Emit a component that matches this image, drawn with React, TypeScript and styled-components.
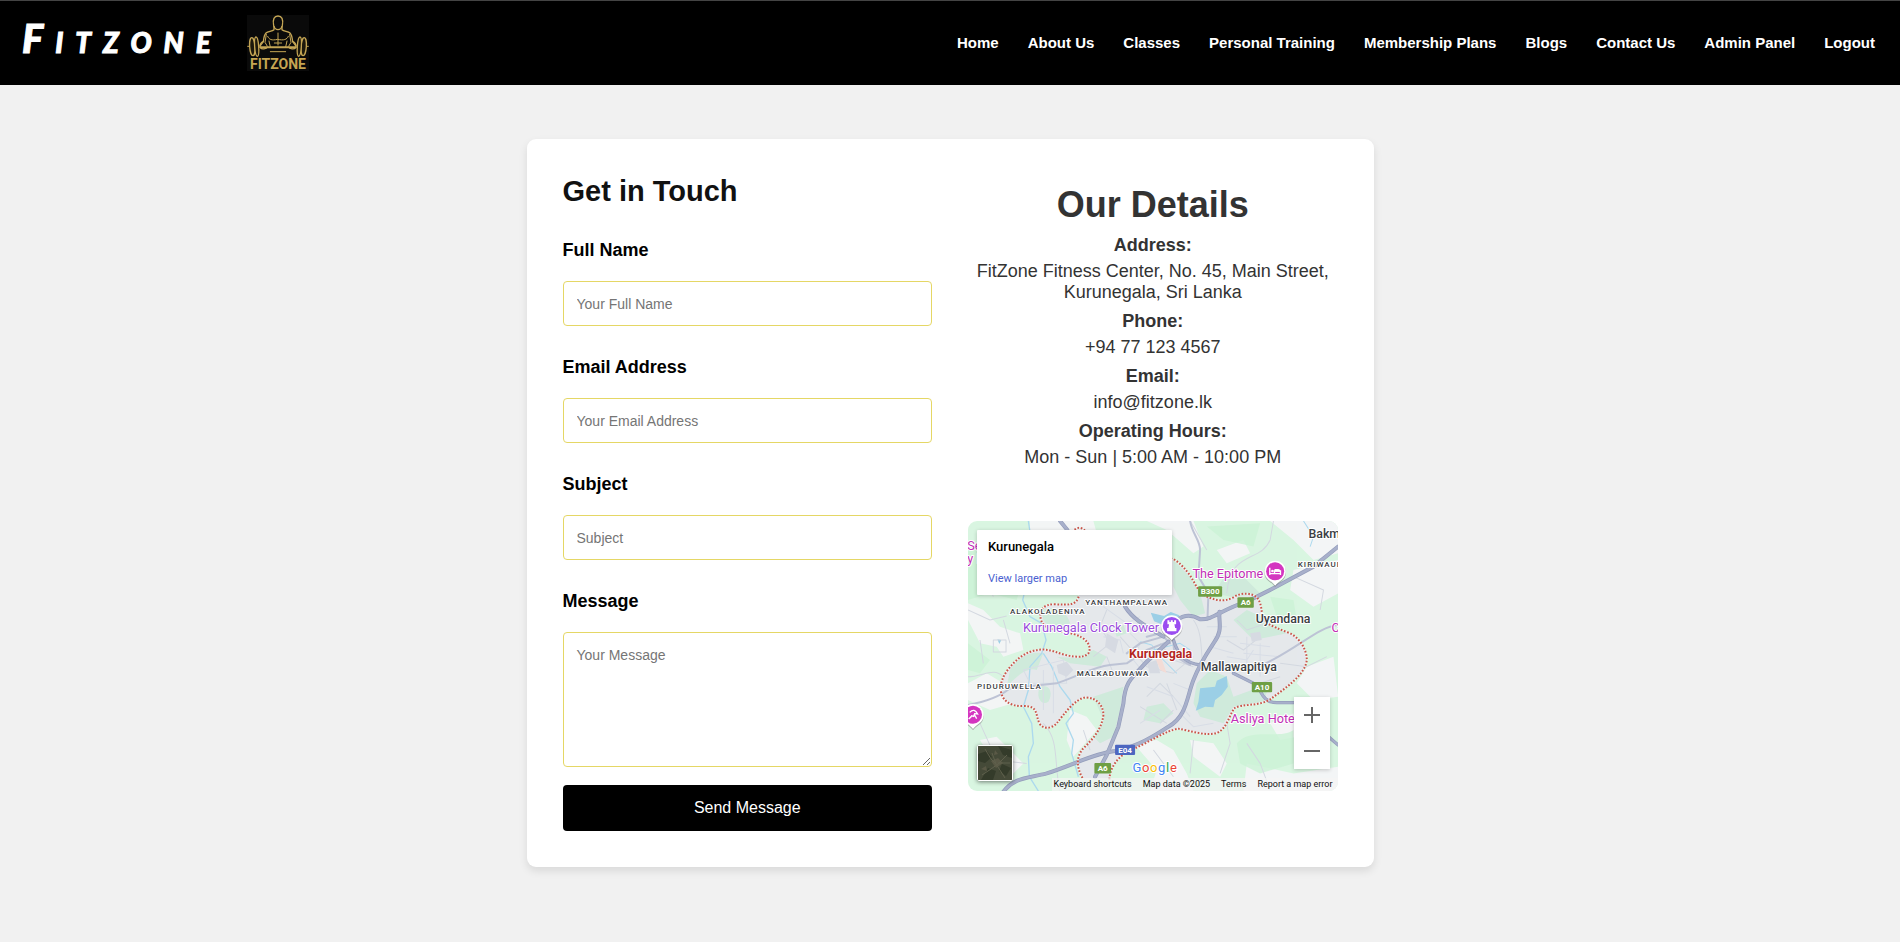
import React from "react";
import styled, { createGlobalStyle } from "styled-components";

const GlobalStyle = createGlobalStyle`
  *, *::before, *::after { box-sizing: border-box; }
  body {
    margin: 0;
    background: #f1f1f1;
    font-family: Arial, "Liberation Sans", sans-serif;
    color: #000;
  }
`;

const Header = styled.header`
  display: flex;
  align-items: center;
  justify-content: space-between;
  min-height: 85px;
  padding: 0 25px 0 22px;
  background: #000;
  border-top: 1px solid #444;
`;

const Brand = styled.a`
  display: flex;
  align-items: center;
  gap: 24px;
  color: #fff;
  text-decoration: none;
`;

const BrandName = styled.span`
  display: block;
  padding-bottom: 6px;
  font-family: Lato, "Liberation Sans", sans-serif;
  font-size: 28px;
  line-height: 48px;
  font-weight: 900;
  font-style: italic;
  text-transform: uppercase;
  letter-spacing: 12px;
  -webkit-text-stroke: 1px #fff;

  &::first-letter {
    font-size: 40px;
  }
`;

const Emblem = styled.svg`
  display: block;
  width: 62px;
  height: 56px;
`;

const Nav = styled.nav`
  display: flex;
  flex-wrap: wrap;
  gap: 29px;
`;

const NavLink = styled.a`
  color: #fff;
  font-size: 15px;
  line-height: 18px;
  font-weight: bold;
  text-decoration: none;
`;

const Main = styled.main`
  padding: 54px 24px;
`;

const Card = styled.section`
  display: grid;
  grid-template-columns: 1fr 1fr;
  gap: 36px;
  max-width: 847px;
  margin: 0 auto;
  padding: 36px;
  background: #fff;
  border-radius: 9px;
  box-shadow: 0 4px 8px rgba(0, 0, 0, 0.1);
`;

const Form = styled.form`
  display: flex;
  flex-direction: column;
`;

const FormTitle = styled.h2`
  margin: 0 0 32px;
  font-size: 29px;
  line-height: 33px;
  color: #111;
`;

const Fields = styled.div`
  display: flex;
  flex-direction: column;
  gap: 31px;
`;

const Field = styled.div`
  display: flex;
  flex-direction: column;
  gap: 20px;
`;

const Label = styled.label`
  font-size: 18px;
  line-height: 21px;
  font-weight: bold;
`;

const Input = styled.input`
  width: 100%;
  height: 45px;
  padding: 13px;
  border: 1px solid #e5d765;
  border-radius: 4px;
  background: #fff;
  font-family: inherit;
  font-size: 14px;
  &::placeholder { color: #757575; }
`;

const TextArea = styled.textarea`
  display: block;
  width: 100%;
  height: 135px;
  padding: 14px 13px;
  border: 1px solid #e5d765;
  border-radius: 4px;
  background: #fff;
  font-family: inherit;
  font-size: 14px;
  resize: vertical;
  &::placeholder { color: #757575; }
`;

const SubmitButton = styled.button`
  height: 46px;
  margin-top: 18px;
  border: 0;
  border-radius: 4px;
  background: #000;
  color: #fff;
  font-family: inherit;
  font-size: 16px;
  cursor: pointer;
`;

const Details = styled.div`
  padding-top: 9px;
  color: #333;
  text-align: center;
`;

const DetailsTitle = styled.h1`
  margin: 0 0 10px;
  font-size: 36px;
  line-height: 41px;
`;

const DetailList = styled.dl`
  display: flex;
  flex-direction: column;
  gap: 8px;
  margin: 0 0 53px;
  font-size: 18px;
  line-height: 21px;
`;

const DetailTerm = styled.dt`
  margin-bottom: 5px;
  font-weight: bold;
`;

const DetailValue = styled.dd`
  margin: 0;
`;

const MapFrame = styled.div`
  position: relative;
  height: 270px;
  border-radius: 9px;
  overflow: hidden;
  font-family: Roboto, "Liberation Sans", sans-serif;
  text-align: left;
`;

const MapDrawing = styled.svg`
  display: block;
  width: 100%;
  height: 100%;
`;

const PlaceCard = styled.div`
  position: absolute;
  top: 9px;
  left: 9px;
  width: 195px;
  height: 65px;
  padding: 9px 11px;
  display: flex;
  flex-direction: column;
  gap: 17px;
  background: #fff;
  border-radius: 1px;
  box-shadow: 0 1px 4px rgba(0, 0, 0, 0.2);
`;

const PlaceName = styled.strong`
  font-size: 13px;
  line-height: 16px;
  font-weight: 500;
  color: #000;
`;

const PlaceLink = styled.a`
  font-size: 11px;
  line-height: 14px;
  color: #4a5fd0;
  text-decoration: none;
`;

const ZoomControls = styled.div`
  position: absolute;
  right: 8px;
  bottom: 22px;
  display: flex;
  flex-direction: column;
  background: #fff;
  box-shadow: 0 1px 4px rgba(0, 0, 0, 0.2);
`;

const ZoomButton = styled.button`
  display: grid;
  place-items: center;
  width: 36px;
  height: 36px;
  padding: 0;
  border: 0;
  background: none;
  cursor: pointer;
`;

const LayerButton = styled.button`
  position: absolute;
  left: 9px;
  bottom: 10px;
  width: 36px;
  height: 36px;
  padding: 0;
  border: 1px solid #fff;
  border-radius: 2px;
  overflow: hidden;
  background: #434836;
  box-shadow: 0 1px 4px rgba(0, 0, 0, 0.5);
  cursor: pointer;

  svg { display: block; }
`;

const Attribution = styled.div`
  position: absolute;
  right: 0;
  bottom: 0;
  display: flex;
  gap: 11px;
  padding: 0 5px 0 2px;
  background: rgba(245, 245, 245, 0.7);
  color: #111;
  font-size: 9px;
  line-height: 13px;
  white-space: nowrap;

  a {
    color: inherit;
    text-decoration: none;
  }
`;

const navItems = [
  "Home",
  "About Us",
  "Classes",
  "Personal Training",
  "Membership Plans",
  "Blogs",
  "Contact Us",
  "Admin Panel",
  "Logout",
];

const details = [
  ["Address:", "FitZone Fitness Center, No. 45, Main Street, Kurunegala, Sri Lanka"],
  ["Phone:", "+94 77 123 4567"],
  ["Email:", "info@fitzone.lk"],
  ["Operating Hours:", "Mon - Sun | 5:00 AM - 10:00 PM"],
];

function FitzoneEmblem() {
  return (
    <Emblem viewBox="0 0 186 168" aria-hidden="true">
      <rect width="186" height="168" fill="#0a0a0a" />
      <g fill="none" stroke="#c5a655" strokeWidth="4" strokeLinecap="round" strokeLinejoin="round">
        <path d="M80 32C76 12 82 3 93 3s17 9 13 29c-2 7-7 12-13 12s-11-5-13-12Z" />
        <path d="M81 34v10c-6 6-18 4-24 10-6 6-7 16-8 26l-9 12" />
        <path d="M105 34v10c6 6 18 4 24 10 6 6 7 16 8 26l9 12" />
        <path d="M62 64c4 10 12 13 30 9 18 4 28 1 32-9M66 78l4 18M120 78l-4 18" strokeWidth="3" />
        <path d="M93 54v36M82 84h22M58 58l-4 24 6 10M128 58l4 24-6 10" strokeWidth="3" />
        <path d="M48 80c-6 2-12 12-8 18s18 4 22-2M138 80c6 2 12 12 8 18s-18 4-22-2" />
        <path d="M40 97h106" strokeWidth="6" />
        <path d="M2 94h10M174 94h10M70 110h46" strokeWidth="3" />
      </g>
      <g fill="#1c180c" stroke="#c5a655" strokeWidth="4">
        <ellipse cx="16" cy="95" rx="8" ry="27" transform="rotate(-4 16 95)" />
        <ellipse cx="29" cy="95" rx="6" ry="29" transform="rotate(-4 29 95)" />
        <ellipse cx="170" cy="95" rx="8" ry="27" transform="rotate(4 170 95)" />
        <ellipse cx="157" cy="95" rx="6" ry="29" transform="rotate(4 157 95)" />
      </g>
      <text
        x="93"
        y="163"
        textAnchor="middle"
        fontFamily="Roboto, 'Liberation Sans', sans-serif"
        fontWeight="700"
        fontSize="42"
        fill="#c5a552"
      >
        FITZONE
      </text>
    </Emblem>
  );
}

const boundary =
  "M338 68C345 50 368 48 378 68M358 250C352 290 325 284 285 283C250 282 235 300 243 330C252 362 300 362 340 372C378 382 396 408 386 428C372 450 320 438 285 425C245 412 210 420 180 442C150 466 122 500 122 535C122 570 150 590 190 588C235 588 225 610 238 640C250 660 275 655 290 640C310 615 345 565 378 562C415 565 430 590 430 615C425 660 395 690 368 717C345 745 352 780 370 808M448 808C450 770 475 735 520 717C560 700 620 660 655 656C690 662 740 680 772 668C800 655 806 620 822 595C845 580 895 590 930 568C975 535 1035 495 1040 450C1040 420 1020 385 990 370C960 358 935 350 915 335C900 320 910 285 890 262C875 250 845 245 820 262C790 278 765 270 740 260C710 245 705 215 685 190C665 165 650 150 634 146";

const minorRoads =
  "M24 300L90 330L140 318M60 390L70 460M100 390h38v36h-38ZM24 500C70 500 100 470 130 500M690 33L700 50L740 120M560 560L600 520L640 560M800 640L810 700L780 790M860 700L900 760L930 840M700 690L690 790M1030 690L1080 740M250 640C300 690 280 760 300 843M370 660L390 720M580 720L640 800M940 33L930 90C900 160 810 120 800 250M1000 200L1090 240L1080 300M440 300L420 350L450 400L400 440M480 380L560 470L640 490L700 440M800 390L850 420L900 380M830 330L860 360L920 340M640 600L600 640M620 520L650 600M540 590L620 640M60 640L110 750L200 760M210 120L250 250M130 330L150 400M700 330C730 370 720 430 730 470M440 440L460 490M600 400L640 450L700 470M960 460L1040 470L1100 440M70 190L100 260M900 520L960 500";

function PlaceLabel({
  x,
  y,
  size,
  fill = "#3a3d42",
  weight = 500,
  spacing = 0,
  children,
}: {
  x: number;
  y: number;
  size: number;
  fill?: string;
  weight?: number;
  spacing?: number;
  children: React.ReactNode;
}) {
  return (
    <text
      x={x}
      y={y}
      fontSize={size}
      fill={fill}
      fontWeight={weight}
      letterSpacing={spacing}
      stroke="#fff"
      strokeWidth="6"
      strokeLinejoin="round"
      paintOrder="stroke"
    >
      {children}
    </text>
  );
}

function Shield({ x, y, width, fill = "#6f9f45", name }: { x: number; y: number; width: number; fill?: string; name: string }) {
  return (
    <g>
      <rect x={x} y={y} width={width} height="31" rx="3" fill={fill} />
      <text x={x + width / 2} y={y + 24} textAnchor="middle" fontSize="24" fontWeight="700" fill="#fff">
        {name}
      </text>
    </g>
  );
}

function Pin({ x, y, fill, children }: { x: number; y: number; fill: string; children: React.ReactNode }) {
  return (
    <g transform={`translate(${x} ${y})`}>
      <path d="M0 43C-6 35-12 31-20 25A32 32 0 1 1 20 25C12 31 6 35 0 43Z" fill="#555" opacity=".4" transform="translate(0 4)" />
      <path d="M0 43C-6 35-12 31-20 25A32 32 0 1 1 20 25C12 31 6 35 0 43Z" fill="#fff" />
      <circle r="27" fill={fill} />
      {children}
    </g>
  );
}

function KurunegalaMap() {
  return (
    <MapDrawing viewBox="24 33 1108 810" preserveAspectRatio="xMinYMid slice" role="img" aria-label="Map of Kurunegala">
      <rect x="0" y="0" width="1160" height="870" fill="#d9f6e1" />
      <g fill="#f3f5f6">
        <path d="M210 33H400L410 70H210Z M560 33H700L730 110L700 130L620 60Z" />
        <path d="M24 280L70 300L120 350L180 370L190 420L130 440L110 410L60 400L24 330Z" />
        <path d="M24 520L80 490L130 520L160 580L90 600L24 570Z" />
        <path d="M770 120L850 90L870 130L800 160ZM1000 180L1134 150V250L1060 290L990 240Z" />
        <path d="M520 700L590 690L640 720L680 790L700 843H570L590 780Z" />
        <path d="M690 690L760 700L800 760L780 800L700 740ZM1040 470L1120 440L1134 560L1060 570L1010 520Z" />
        <path d="M930 640L1000 610L1010 680L960 690ZM60 690L110 680L190 760L160 790L90 740ZM930 33H1134V130L1060 150L1000 90Z" />
        <path d="M330 600L380 620L410 660L340 740L320 690ZM860 760L1000 790L1134 770V843H850Z" />
      </g>
      <path
        d="M358 250C352 290 325 284 285 283C250 282 235 300 243 330C252 362 300 362 340 372C378 382 396 408 386 428C372 450 320 438 285 425C245 412 210 420 180 442C150 466 122 500 122 535C122 570 150 590 190 588C235 588 225 610 238 640C250 660 275 655 290 640C310 615 345 565 378 562C415 565 430 590 430 615C425 660 395 690 368 717C345 745 352 780 370 808H448C450 770 475 735 520 717C560 700 620 660 655 656C690 662 740 680 772 668C800 655 806 620 822 595C845 580 895 590 930 568C975 535 1035 495 1040 450C1040 420 1020 385 990 370C960 358 935 350 915 335C900 320 910 285 890 262C875 250 845 245 820 262C790 278 765 270 740 260C710 245 705 215 685 190L634 146V250Z"
        fill="#e5e8ec"
      />
      <g fill="#cfeadb">
        <path d="M245 300C280 285 320 300 330 340C300 365 260 350 250 330Z" />
        <path d="M150 480C180 430 225 425 250 430L230 480C200 470 170 500 140 530Z" />
        <path d="M290 440L350 445L400 420L440 440L420 470L330 460ZM240 530C270 520 280 550 265 575C245 590 225 560 240 530Z" />
        <path d="M640 150L690 200L720 250L735 310L700 320L660 270L640 230Z" />
        <path d="M760 250L800 190L850 200L900 250L820 262ZM820 330L860 300L905 320L980 370L930 380L880 390Z" />
        <path d="M400 560L490 530L480 600L460 680L420 700L400 680L430 630Z" />
        <path d="M710 520L750 480L800 500L820 560L930 520L910 575L820 590L790 640L720 620L700 580Z" />
        <path d="M560 590L610 580L640 610L600 640L550 630ZM460 350L490 345L500 370L470 380Z" />
      </g>
      <g fill="#cbf3d6" opacity=".8">
        <path d="M24 120C100 100 150 140 190 200L170 270L90 250L24 270ZM830 700C870 650 960 690 1000 660V760L900 790L840 760Z" />
        <path d="M24 400L90 450L60 490L24 480ZM740 50L900 40L880 110L790 90ZM930 260L1000 270L1010 330L950 320Z" />
      </g>
      <g fill="#9bcfe6">
        <path d="M720 535L765 530L770 512L800 498L803 530L785 555L765 570L760 592L735 590L707 602L715 575Z" />
        <path d="M572 308L612 318L632 306L658 316L655 334L630 330L608 344L582 334ZM112 388l12 2-6 12Z" />
      </g>
      <g fill="none" stroke="#acd9ee" strokeWidth="4" strokeLinejoin="round">
        <path d="M205 33L215 100L190 160L200 220L188 270L210 320L245 340L258 390L245 430L210 470L205 540L190 590L215 640L220 700L205 740L208 800L235 843" />
        <path d="M250 430L275 470L300 530L330 570L340 610L318 640L340 690L335 730L355 800" />
        <path d="M540 395L575 405L610 450L650 490M520 440L580 420L660 400L690 420M1030 33L1060 80L1050 110" strokeWidth="3" />
      </g>
      <path d={minorRoads} fill="none" stroke="#d3d8e0" strokeWidth="3" strokeLinejoin="round" />
      <g fill="none" stroke="#d8dde6" strokeWidth="3">
        <path d="M430 290L500 340L540 320M500 360L540 400L520 450L560 500M740 350H800M760 380H830M750 410L820 430M800 440L860 450L880 420M640 520L690 540M560 530L640 560L690 620M540 640L600 600M430 380L480 390L490 430M660 610L700 650L760 640M860 380V470M900 400V500M840 400L930 410M850 430L960 440M190 480L310 450L320 520L210 520ZM250 480V600M280 470V610" />
      </g>
      <g fill="#d6dae2">
        <path d="M290 465L320 455L340 480L320 500L295 490ZM560 460L590 450L600 490L570 490ZM870 370L900 365L905 390L875 395ZM440 370L475 390L465 430L435 410Z" />
        <path d="M580 430L600 435L620 490L600 480Z" fill="#f3dcd6" />
      </g>
      <g fill="none" stroke="#bdc3d5" strokeWidth="6" strokeLinecap="round" strokeLinejoin="round">
        <path d="M24 585C80 575 120 560 150 535L290 520C350 500 400 470 450 465L500 460L560 420L625 395" />
        <path d="M690 33C695 70 720 90 720 120L715 200L745 250L742 330M1134 345C1080 350 1030 400 940 448L880 480M610 380L540 400L500 430M640 390C640 430 640 440 690 465M630 400L600 370L560 380" />
      </g>
      <g fill="none" strokeLinecap="round" strokeLinejoin="round">
        <g stroke="#949dbb" strokeWidth="12">
          <path d="M130 845C165 800 205 805 260 790C340 765 400 730 465 723C530 710 580 680 625 650C680 620 680 560 700 510C715 470 740 430 760 400C790 360 775 340 778 305" />
          <path d="M645 340C660 315 690 310 720 328C760 330 780 300 860 275L945 232L1060 170L1134 110" />
          <path d="M405 800L440 735L475 650L490 580C495 510 520 500 560 455L625 395" />
          <path d="M300 33L322 60M495 290C520 330 560 350 610 380" />
          <path d="M640 390C655 440 680 460 720 465M820 490L880 520C905 530 900 578 950 578H1000M1105 680L1134 705" strokeWidth="10" />
        </g>
        <g stroke="#a8b0cb" strokeWidth="8">
          <path d="M130 845C165 800 205 805 260 790C340 765 400 730 465 723C530 710 580 680 625 650C680 620 680 560 700 510C715 470 740 430 760 400C790 360 775 340 778 305" />
          <path d="M645 340C660 315 690 310 720 328C760 330 780 300 860 275L945 232L1060 170L1134 110" />
          <path d="M405 800L440 735L475 650L490 580C495 510 520 500 560 455L625 395" />
          <path d="M300 33L322 60M495 290C520 330 560 350 610 380" />
          <path d="M640 390C655 440 680 460 720 465M820 490L880 520C905 530 900 578 950 578H1000M1105 680L1134 705" strokeWidth="6" />
        </g>
      </g>
      <path d={boundary} fill="none" stroke="#fff" strokeWidth="6" opacity=".5" />
      <path d={boundary} fill="none" stroke="#c9564b" strokeWidth="6" strokeDasharray="5 5" />

      <Shield x={714} y={229} width={72} name="B300" />
      <Shield x={832} y={262} width={49} name="A6" />
      <Shield x={875} y={516} width={61} name="A10" />
      <Shield x={403} y={759} width={50} name="A6" />
      <Shield x={465} y={704} width={60} fill="#4d66c0" name="E04" />

      <PlaceLabel x={376} y={284} size={24} spacing={3}>YANTHAMPALAWA</PlaceLabel>
      <PlaceLabel x={150} y={311} size={24} spacing={3}>ALAKOLADENIYA</PlaceLabel>
      <PlaceLabel x={350} y={497} size={24} spacing={3}>MALKADUWAWA</PlaceLabel>
      <PlaceLabel x={51} y={537} size={24} spacing={3}>PIDURUWELLA</PlaceLabel>
      <PlaceLabel x={1013} y={171} size={24} spacing={3}>KIRIWAUL</PlaceLabel>
      <PlaceLabel x={1045} y={84} size={37}>Bakm</PlaceLabel>
      <PlaceLabel x={887} y={338} size={37}>Uyandana</PlaceLabel>
      <PlaceLabel x={722} y={483} size={37}>Mallawapitiya</PlaceLabel>
      <PlaceLabel x={507} y={443} size={37} fill="#b3261e" weight={700}>Kurunegala</PlaceLabel>
      <PlaceLabel x={189} y={367} size={38} fill="#9a4bdb" weight={400}>Kurunegala Clock Tower</PlaceLabel>
      <PlaceLabel x={697} y={203} size={38} fill="#c12fb5" weight={400}>The Epitome</PlaceLabel>
      <PlaceLabel x={812} y={640} size={38} fill="#c12fb5" weight={400}>Asliya Hote</PlaceLabel>
      <PlaceLabel x={22} y={121} size={38} fill="#c12fb5" weight={400}>Se</PlaceLabel>
      <PlaceLabel x={22} y={158} size={38} fill="#c12fb5" weight={400}>y I</PlaceLabel>
      <PlaceLabel x={1114} y={367} size={38} fill="#c12fb5" weight={400}>C</PlaceLabel>

      <Pin x={945} y={184} fill="#d436c0">
        <path d="M-16-11v22M-16 7h32v4M16 7V-1H-2v7" fill="none" stroke="#fff" strokeWidth="4" />
        <path d="M-2-7h12q6 0 6 8H-2Z" fill="#fff" />
        <circle cx="-8" cy="-1" r="4" fill="#fff" />
      </Pin>
      <Pin x={635} y={348} fill="#9a4df0">
        <path d="M-13-17h6v5h4v-5h6v5h4v-5h6v12h-5l2 11h4v10h-28V6h4l2-11h-5Z" fill="#fff" />
      </Pin>
      <Pin x={39} y={614} fill="#d436c0">
        <path d="M-10-7q14-14 24 5l-9-1-3 8-6-2-4 7M-4 4l-9 9M3-2l8 14" fill="none" stroke="#fff" strokeWidth="4" />
      </Pin>

      <text x="517" y="787" fontSize="39" fontWeight="400" stroke="#fff" strokeWidth="6" paintOrder="stroke" letterSpacing="2">
        <tspan fill="#4285f4">G</tspan>
        <tspan fill="#ea4335">o</tspan>
        <tspan fill="#fbbc05">o</tspan>
        <tspan fill="#4285f4">g</tspan>
        <tspan fill="#34a853">l</tspan>
        <tspan fill="#ea4335">e</tspan>
      </text>
    </MapDrawing>
  );
}

function SatelliteThumb() {
  return (
    <svg width="34" height="34" viewBox="0 0 34 34" aria-hidden="true">
      <rect width="34" height="34" fill="#454a38" />
      <path d="M0 8L9 5L14 11L7 17L0 15ZM20 0L34 4V12L25 9ZM10 22L18 25L15 34H3ZM24 18L33 22L28 30L21 25Z" fill="#343b2a" />
      <path d="M13 15L20 12L25 17L18 22ZM3 23L8 20L9 25ZM17 4L20 8L16 9Z" fill="#5a5946" />
      <path d="M7 3L13 13L18 18L27 32M29 9L20 18L13 23L4 29M18 18L14 7M20 17L32 17" fill="none" stroke="#5f604c" strokeWidth="1" />
    </svg>
  );
}

export default function App() {
  return (
    <>
      <GlobalStyle />
      <Header>
        <Brand href="#home">
          <BrandName>Fitzone</BrandName>
          <FitzoneEmblem />
        </Brand>
        <Nav aria-label="Main">
          {navItems.map((item) => (
            <NavLink key={item} href="#">
              {item}
            </NavLink>
          ))}
        </Nav>
      </Header>

      <Main>
        <Card>
          <Form onSubmit={(event) => event.preventDefault()}>
            <FormTitle>Get in Touch</FormTitle>
            <Fields>
              <Field>
                <Label htmlFor="name">Full Name</Label>
                <Input id="name" type="text" placeholder="Your Full Name" />
              </Field>
              <Field>
                <Label htmlFor="email">Email Address</Label>
                <Input id="email" type="email" placeholder="Your Email Address" />
              </Field>
              <Field>
                <Label htmlFor="subject">Subject</Label>
                <Input id="subject" type="text" placeholder="Subject" />
              </Field>
              <Field>
                <Label htmlFor="message">Message</Label>
                <TextArea id="message" placeholder="Your Message" />
              </Field>
            </Fields>
            <SubmitButton type="submit">Send Message</SubmitButton>
          </Form>

          <Details>
            <DetailsTitle>Our Details</DetailsTitle>
            <DetailList>
              {details.map(([term, value]) => (
                <div key={term}>
                  <DetailTerm>{term}</DetailTerm>
                  <DetailValue>{value}</DetailValue>
                </div>
              ))}
            </DetailList>
            <MapFrame>
              <KurunegalaMap />
              <PlaceCard>
                <PlaceName>Kurunegala</PlaceName>
                <PlaceLink href="#map">View larger map</PlaceLink>
              </PlaceCard>
              <LayerButton type="button" aria-label="Show satellite imagery">
                <SatelliteThumb />
              </LayerButton>
              <ZoomControls>
                <ZoomButton type="button" aria-label="Zoom in">
                  <svg width="16" height="16" viewBox="0 0 16 16" aria-hidden="true">
                    <path d="M7 0h2v7h7v2H9v7H7V9H0V7h7Z" fill="#666" />
                  </svg>
                </ZoomButton>
                <ZoomButton type="button" aria-label="Zoom out">
                  <svg width="16" height="16" viewBox="0 0 16 16" aria-hidden="true">
                    <path d="M0 7h16v2H0Z" fill="#666" />
                  </svg>
                </ZoomButton>
              </ZoomControls>
              <Attribution>
                <a href="#shortcuts">Keyboard shortcuts</a>
                <span>Map data ©2025</span>
                <a href="#terms">Terms</a>
                <a href="#report">Report a map error</a>
              </Attribution>
            </MapFrame>
          </Details>
        </Card>
      </Main>
    </>
  );
}
